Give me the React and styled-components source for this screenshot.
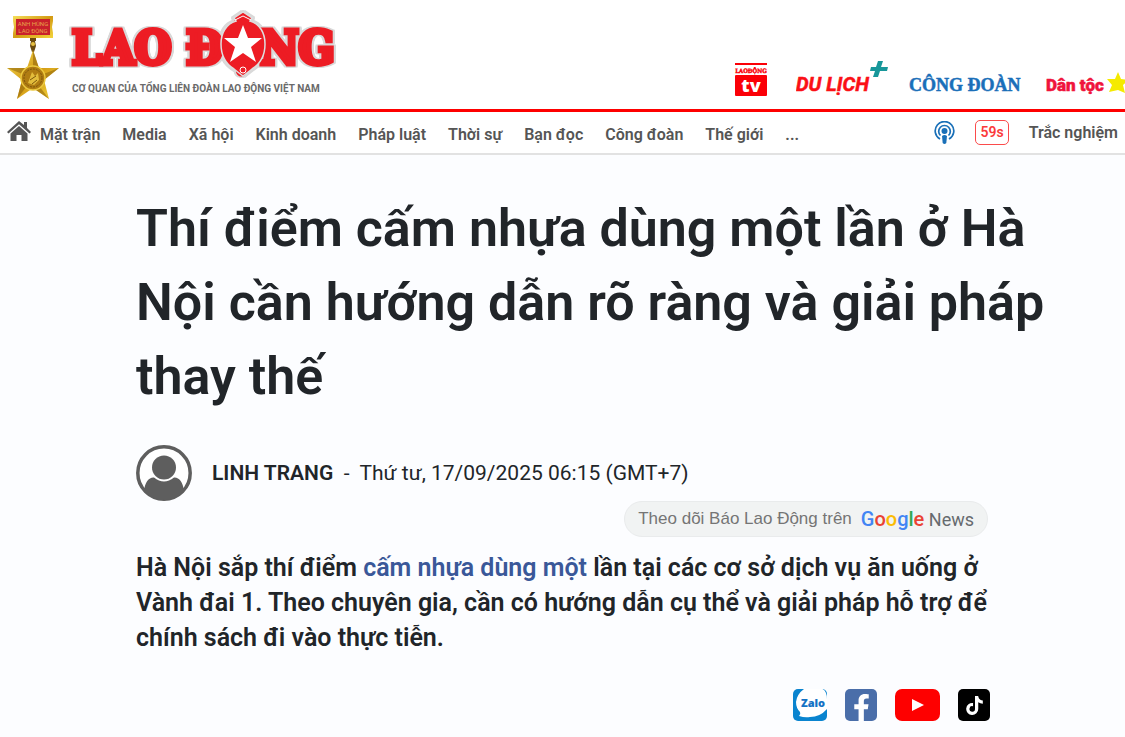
import styled, { createGlobalStyle } from 'styled-components';
import { FaFacebookF, FaTiktok } from 'react-icons/fa';

const GlobalStyle = createGlobalStyle`
* { box-sizing: border-box; }
body {
  margin: 0;
  min-height: 100vh;
  background: #fcfdff;
  font-family: Roboto, "Liberation Sans", sans-serif;
  color: #212529;
}
a { text-decoration: none; color: inherit; }
svg { display: block; }
`;

const secoes = ['Mặt trận', 'Media', 'Xã hội', 'Kinh doanh', 'Pháp luật', 'Thời sự', 'Bạn đọc', 'Công đoàn', 'Thế giới', '...'];

const Page = styled.div`
  overflow-x: hidden;
`;

const Masthead = styled.header`
  display: flex;
  justify-content: space-between;
  height: 112px;
  padding-left: 6px;
  background: #fff;
  border-bottom: 3px solid #fe0000;
`;

const Brand = styled.a`
  display: flex;
  gap: 8px;
  padding-top: 10px;
`;

const BrandName = styled.div`
  display: flex;
  flex-direction: column;
  gap: 3px;
`;

const WordmarkSvg = styled.svg`
  filter: drop-shadow(2px 0 0 #d9d9d9) drop-shadow(-2px 0 0 #d9d9d9) drop-shadow(0 1px 0 #d9d9d9) drop-shadow(0 -1px 0 #d9d9d9);
`;

const Tagline = styled.span`
  padding-left: 4px;
  font-size: 10px;
  line-height: 16px;
  font-weight: 700;
  color: #6a6a6a;
  white-space: nowrap;
`;

const Partners = styled.div`
  display: flex;
  align-items: flex-end;
  gap: 20px;
  padding-bottom: 12px;
`;

const PartnerLink = styled.a`
  display: block;
  flex: none;
  padding-right: ${(p) => p.$pr || 0}px;
`;

const Nav = styled.nav`
  display: flex;
  justify-content: space-between;
  align-items: center;
  height: 43px;
  padding: 0 7px;
  background: #fff;
  border-bottom: 2px solid #e2e2e2;
  font-size: 16px;
  font-weight: 600;
  color: #555;
  white-space: nowrap;
`;

const NavGroup = styled.div`
  display: flex;
  align-items: center;
  gap: ${(p) => p.$gap}px;
`;

const HomeLink = styled.a`
  padding-bottom: 4px;
`;

const NavList = styled.ul`
  display: flex;
  gap: 22px;
  margin: 0;
  padding: 4px 0 0;
  list-style: none;
`;

const Badge = styled.a`
  padding: 0 4px;
  border: 1px solid #fb4b4b;
  border-radius: 5px;
  font-size: 14px;
  line-height: 23px;
  color: #fb3b3b;
`;

const Article = styled.main`
  padding: 37px 64px 0 136px;
`;

const Title = styled.h1`
  margin: 0;
  font-size: 52px;
  line-height: 74px;
  font-weight: 600;
`;

const Byline = styled.div`
  display: flex;
  align-items: center;
  gap: 20px;
  margin-top: 31px;
  font-size: 21px;
`;

const Author = styled.a`
  font-weight: 600;
`;

const Narrow = styled.div`
  max-width: 854px;
`;

const FollowRow = styled.div`
  display: flex;
  justify-content: flex-end;
  padding-right: 2px;
`;

const Follow = styled.a`
  display: flex;
  align-items: center;
  gap: 9px;
  height: 36px;
  padding: 0 13px;
  border: 1px solid #e9ebec;
  border-radius: 18px;
  background: #f1f3f3;
  font-family: "Liberation Sans", sans-serif;
  font-size: 17px;
  color: #757575;
`;

const News = styled.span`
  font-family: Roboto, sans-serif;
  font-size: 18px;
  color: #666a6e;
`;

const G = styled.span`
  font-size: 20px;
  font-weight: 500;
  color: ${(p) => p.$c};
`;

const Sapo = styled.p`
  margin: 13px 0 0;
  font-size: 25px;
  line-height: 35px;
  font-weight: 600;

  a { color: #3a5899; }
`;

const Social = styled.div`
  display: flex;
  justify-content: flex-end;
  align-items: center;
  gap: 18px;
  margin-top: 34px;
`;

const SocialLink = styled.a`
  display: flex;
  align-items: ${(p) => p.$align || 'center'};
  justify-content: center;
  width: ${(p) => p.$w || 32}px;
  height: 32px;
  border-radius: ${(p) => p.$r || 5}px;
  background: ${(p) => p.$bg};
  color: #fff;
  overflow: hidden;
`;

function Medal() {
  return (
    <svg width="54" height="92" viewBox="0 0 54 92" aria-hidden="true">
      <defs>
        <linearGradient id="gold" x1="0" y1="0" x2="1" y2="1">
          <stop offset="0" stopColor="#f6df5a" />
          <stop offset=".5" stopColor="#d39a14" />
          <stop offset="1" stopColor="#f3d53c" />
        </linearGradient>
      </defs>
      <path d="M7 6H47V11L46 17L47 23V28H7V23L8 17L7 11Z" fill="url(#gold)" />
      <path d="M10 9H44V25H10Z" fill="#c9202b" />
      <text x="27" y="16" textAnchor="middle" fontSize="6" fill="#e8a24a" fontFamily="Roboto, sans-serif">ANH HÙNG</text>
      <text x="27" y="23" textAnchor="middle" fontSize="6" fill="#e8a24a" fontFamily="Roboto, sans-serif">LAO ĐỘNG</text>
      <path d="M24 28H30V31H29L30 36L28 42H26L24 36L25 31H24Z" fill="#6b4a10" />
      <circle cx="27" cy="34" r="2" fill="#e8c142" />
      <path d="M27 40L33 58H53L38 70L43 89L27 78L11 89L16 70L1 58H21Z" fill="url(#gold)" />
      <path d="M27 40L33 58L27 68ZM53 58L38 70L27 68ZM43 89L27 78V68ZM11 89L16 70L27 68ZM1 58H21L27 68Z" fill="#8d610a" opacity=".55" />
      <circle cx="27" cy="68" r="12" fill="#b07c12" stroke="#ecc93f" strokeWidth="1.5" />
      <circle cx="27" cy="68" r="9" fill="none" stroke="#7c560c" strokeDasharray="2 1" />
      <path d="M22 73L26 62L29 66L32 63L33 70L28 75Z" fill="#e3bd3c" />
      <path d="M24 70L30 66M26 74L31 70" stroke="#7c560c" />
    </svg>
  );
}

function Wordmark() {
  return (
    <WordmarkSvg width="272" height="68" viewBox="0 0 272 68" role="img" aria-label="Lao Động">
      <text
        x="4"
        y="54"
        fontFamily='"DejaVu Serif Condensed", "DejaVu Serif", serif'
        fontWeight="700"
        fontSize="47"
        fill="#ed1c24"
        stroke="#ed1c24"
        strokeWidth="5"
      >
        LAO ĐỘNG
      </text>
      <path d="M166 8L175 2L184 8L182 11C192 14 197 23 197 34C197 46 192 54 184 59L175 66L166 59C158 54 153 46 153 34C153 23 158 14 168 11Z" fill="#ed1c24" stroke="#dedede" strokeWidth="1.500" />
      <path d="M167 10L175 6L183 10" fill="none" stroke="#fff" />
      <path d="M175 15L180 28H194L183 37L188 52L175 43L162 52L167 37L156 28H170Z" fill="#fff" />
      <circle cx="175" cy="60" r="3" fill="#ed1c24" stroke="#fff" />
    </WordmarkSvg>
  );
}

function LogoTv() {
  return (
    <svg width="34" height="34" viewBox="0 0 34 34" role="img" aria-label="Lao Động TV">
      <path d="M1 1H33" stroke="#fb0007" strokeWidth="2" />
      <text x="17" y="10" textAnchor="middle" fontFamily='"DejaVu Serif Condensed", serif' fontWeight="700" fontSize="6" fill="#fb0007" stroke="#fb0007" strokeWidth=".4">LAOĐỘNG</text>
      <rect x="1" y="12" width="32" height="21" rx="1" fill="#fb0007" />
      <text x="17" y="29" textAnchor="middle" fontFamily='"Open Sans", sans-serif' fontWeight="800" fontSize="18" fill="#fff">tv</text>
    </svg>
  );
}

function LogoDuLich() {
  return (
    <svg width="92" height="38" viewBox="0 0 92 38" role="img" aria-label="Du lịch">
      <text x="0" y="32" fontFamily="Roboto, sans-serif" fontStyle="italic" fontWeight="700" fontSize="20" fill="#fb1016" stroke="#fb1016" strokeWidth=".5">DU LỊCH</text>
      <path d="M82 2H87L85 8H92L91 12H84L82 18H77L79 12H74L75 8H80Z" fill="#17979a" />
    </svg>
  );
}

function LogoCongDoan() {
  return (
    <svg width="116" height="34" viewBox="0 0 116 34" role="img" aria-label="Công đoàn">
      <text x="1" y="28" fontFamily='"Liberation Serif", serif' fontWeight="700" fontSize="18" fill="#1a6fb9" stroke="#1a6fb9" strokeWidth=".5">CÔNG ĐOÀN</text>
    </svg>
  );
}

function LogoDanToc() {
  return (
    <svg width="79" height="34" viewBox="0 0 79 34" role="img" aria-label="Dân tộc">
      <text x="0" y="28" fontFamily="Roboto, sans-serif" fontWeight="900" fontSize="17" fill="#f0143c" stroke="#f0143c" strokeWidth=".5">Dân tộc</text>
      <path d="M72 9L75 16L83 17L77 22L79 30L72 27L63 29L66 22L61 16L69 16Z" fill="#f5ea00" />
    </svg>
  );
}

function Home() {
  return (
    <svg width="24" height="20" viewBox="0 0 24 20" fill="#555" aria-hidden="true">
      <path d="M12 0L17 4V1H20V7L24 11L22.5 12.5L12 3.3L1.5 12.5L0 11Z" />
      <path d="M12 5L20.5 12.4V20H14.5V14H9.5V20H3.5V12.4Z" />
    </svg>
  );
}

function Podcast() {
  return (
    <svg width="21" height="24" viewBox="0 0 21 24" fill="none" stroke="#1a70b8" strokeWidth="1.7" aria-hidden="true">
      <path d="M6 18A9.3 9.3 0 1 1 15 18" />
      <path d="M6.5 14.5A5.8 5.8 0 1 1 14.5 14.5" />
      <circle cx="10.5" cy="10" r="3" fill="#1a70b8" stroke="none" />
      <path d="M8 15Q10.500 13 13 15L12.300 22Q10.500 24 8.700 22Z" fill="#1a70b8" stroke="none" />
    </svg>
  );
}

function Avatar() {
  return (
    <svg width="56" height="56" viewBox="0 0 56 56" aria-hidden="true">
      <circle cx="28" cy="28" r="26.200" fill="#fff" stroke="#5e5e5e" strokeWidth="3.500" />
      <circle cx="28" cy="22.500" r="12" fill="#5e5e5e" />
      <path d="M8 46C9 37 13 32 18 32.500Q28 40.500 38 32.500C43 32 47 37 48 46Q40 55 28 55Q16 55 8 46Z" fill="#5e5e5e" />
    </svg>
  );
}

function Zalo() {
  return (
    <svg width="34" height="32" viewBox="0 0 34 32" aria-hidden="true">
      <path d="M11 0H30Q34 3 34 10V20Q27 28 17 28Q12 29 6 27Q8 25 7 23Q3 19 3 13Q4 5 11 0Z" fill="#fff" />
      <text x="20" y="18" textAnchor="middle" fontFamily='"Open Sans", sans-serif' fontWeight="800" fontSize="11" fill="#1472c4">Zalo</text>
    </svg>
  );
}

function Header() {
  return (
    <Masthead>
      <Brand href="#">
        <Medal />
        <BrandName>
          <Wordmark />
          <Tagline>CƠ QUAN CỦA TỔNG LIÊN ĐOÀN LAO ĐỘNG VIỆT NAM</Tagline>
        </BrandName>
      </Brand>
      <Partners>
        <PartnerLink href="#" $pr={8}><LogoTv /></PartnerLink>
        <PartnerLink href="#"><LogoDuLich /></PartnerLink>
        <PartnerLink href="#" $pr={2}><LogoCongDoan /></PartnerLink>
        <PartnerLink href="#"><LogoDanToc /></PartnerLink>
      </Partners>
    </Masthead>
  );
}

function Menu() {
  return (
    <Nav>
      <NavGroup $gap={9}>
        <HomeLink href="#" aria-label="Trang chủ"><Home /></HomeLink>
        <NavList>
          {secoes.map((s) => (
            <li key={s}><a href="#">{s}</a></li>
          ))}
        </NavList>
      </NavGroup>
      <NavGroup $gap={20}>
        <a href="#" aria-label="Podcast"><Podcast /></a>
        <Badge href="#">59s</Badge>
        <a href="#">Trắc nghiệm</a>
      </NavGroup>
    </Nav>
  );
}

function App() {
  return (
    <Page>
      <GlobalStyle />
      <Header />
      <Menu />
      <Article>
        <Title>Thí điểm cấm nhựa dùng một lần ở Hà Nội cần hướng dẫn rõ ràng và giải pháp thay thế</Title>
        <Byline>
          <Avatar />
          <span>
            <Author href="#">LINH TRANG</Author>&nbsp; -&nbsp; Thứ tư, 17/09/2025 06:15 (GMT+7)
          </span>
        </Byline>
        <Narrow>
          <FollowRow>
            <Follow href="#">
              Theo dõi Báo Lao Động trên
              <News>
                <G $c="#4285f4">G</G><G $c="#ea4335">o</G><G $c="#fbbc05">o</G><G $c="#4285f4">g</G><G $c="#34a853">l</G><G $c="#ea4335">e</G> News
              </News>
            </Follow>
          </FollowRow>
          <Sapo>
            Hà Nội sắp thí điểm <a href="#">cấm nhựa dùng một</a> lần tại các cơ sở dịch vụ ăn uống ở Vành đai 1. Theo chuyên gia, cần có hướng dẫn cụ thể và giải pháp hỗ trợ để chính sách đi vào thực tiễn.
          </Sapo>
          <Social>
            <SocialLink href="#" aria-label="Zalo" $w={34} $bg="#0a84cf"><Zalo /></SocialLink>
            <SocialLink href="#" aria-label="Facebook" $align="flex-end" $bg="#4a6ea9"><FaFacebookF size={27} /></SocialLink>
            <SocialLink href="#" aria-label="YouTube" $w={45} $r={7} $bg="#fe0000">
              <svg width="12" height="12" viewBox="0 0 12 12"><path d="M0 0L12 6L0 12Z" fill="#fff" /></svg>
            </SocialLink>
            <SocialLink href="#" aria-label="TikTok" $bg="#000"><FaTiktok size={19} /></SocialLink>
          </Social>
        </Narrow>
      </Article>
    </Page>
  );
}

export default App;
